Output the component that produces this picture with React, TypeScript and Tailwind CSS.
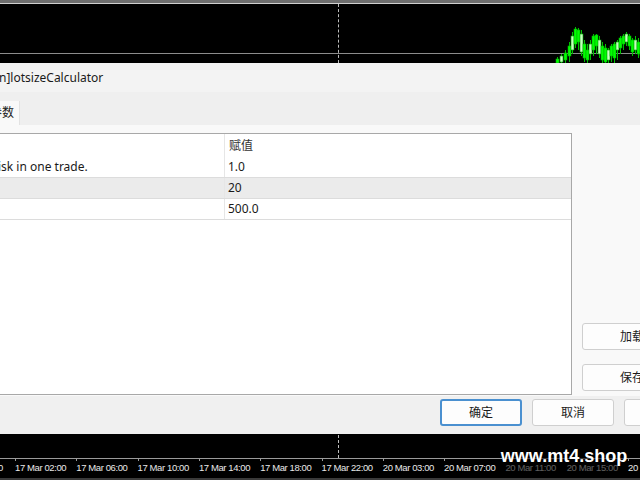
import React from 'react';

const ui = { fontFamily: '"Noto Sans", "Noto Sans CJK SC", sans-serif' };
const axisFont = { fontFamily: '"Liberation Sans", Arial, sans-serif' };

// candles: x, high, low, open, close
const candles: [number, number, number, number, number][] = [
  [2, 57, 63, 59, 63],
  [6, 54, 63, 56, 62],
  [10, 50, 63, 53, 60],
  [14, 42, 62, 46, 56],
  [17, 32, 54, 36, 50],
  [20, 27, 48, 29, 44],
  [23, 28, 50, 30, 42],
  [26, 30, 56, 34, 52],
  [29, 40, 62, 44, 58],
  [32, 44, 63, 50, 60],
  [35, 40, 60, 44, 54],
  [38, 34, 56, 36, 50],
  [41, 34, 54, 35, 46],
  [44, 36, 58, 40, 54],
  [47, 42, 63, 46, 60],
  [50, 44, 63, 48, 62],
  [53, 48, 63, 50, 60],
  [56, 44, 62, 46, 56],
  [59, 42, 63, 44, 58],
  [62, 40, 60, 42, 50],
  [65, 36, 54, 38, 48],
  [68, 34, 50, 36, 44],
  [71, 32, 46, 34, 42],
  [74, 34, 50, 36, 46],
  [77, 38, 56, 40, 52],
  [80, 36, 54, 40, 50],
  [83, 38, 58, 42, 54],
  [86, 40, 60, 44, 56],
];

const timeLabels = [
  '17 Mar 02:00',
  '17 Mar 06:00',
  '17 Mar 10:00',
  '17 Mar 14:00',
  '17 Mar 18:00',
  '17 Mar 22:00',
  '20 Mar 03:00',
  '20 Mar 07:00',
  '20 Mar 11:00',
  '20 Mar 15:00',
  '20 Mar 19:00',
];

function TopChart() {
  return (
    <div className="relative h-[63px] bg-black">
      <div className="h-[3px] bg-[#6e6e6e]" />
      <div className="h-[1px] bg-[#cfcfcf]" />
      <div className="absolute left-0 right-0 top-[53px] h-[1px] bg-[#8c8c8c]" />
      <div className="absolute left-[338px] top-[4px] bottom-0 border-l border-dashed border-[#bdbdbd]" />
      <svg className="absolute left-[554px] top-0" width="90" height="63" viewBox="0 0 90 63">
        {candles.map(([x, hi, lo, o, c], i) => (
          <g key={i}>
            <line x1={x + 1.5} y1={hi} x2={x + 1.5} y2={lo} stroke="#00c000" strokeWidth="1" />
            <rect
              x={x}
              y={Math.min(o, c)}
              width="3"
              height={Math.abs(o - c)}
              fill={i % 3 === 1 ? '#c8ffc0' : '#00ff00'}
              stroke="#00b000"
              strokeWidth="0.6"
            />
          </g>
        ))}
      </svg>
    </div>
  );
}

function Btn({ label, primary, className }: { label: string; primary?: boolean; className?: string }) {
  return (
    <div
      className={`flex h-[27px] items-center justify-center rounded-[3px] bg-[#fdfdfd] text-[12px] text-[#1a1a1a] ${
        primary ? 'border-2 border-[#4a90d0]' : 'border border-[#cfcfcf]'
      } ${className ?? ''}`}
    >
      {label}
    </div>
  );
}

function Dialog() {
  return (
    <div className="flex h-[371px] flex-col bg-[#f0f0f0] text-[12px] text-[#1a1a1a]" style={ui}>
      {/* title */}
      <div className="flex h-[29px] items-center bg-[#f3f3f3] pt-[1px]">
        <span className="-ml-[1px]">n]lotsizeCalculator</span>
      </div>
      {/* tab strip */}
      <div className="flex h-[33px] items-end bg-[#efefef]">
        <div className="flex h-[24px] w-[20px] items-center justify-end overflow-hidden border-r border-[#e2e2e2] bg-[#f9f9f9] pr-[5px]">
          <span className="whitespace-nowrap">参数</span>
        </div>
      </div>
      {/* content */}
      <div className="flex h-[271px] bg-[#f9f9f9] pt-[8px]">
        <div className="h-[262px] w-[572px] shrink-0 overflow-hidden border-y border-r border-[#a8a8a8] bg-white">
          <div className="flex h-[23px] items-center">
            <div className="h-full w-[225px] border-r border-[#e6e6e6]" />
            <div className="pl-[4px] text-[#333]">赋值</div>
          </div>
          {[
            ['isk in one trade.', '1.0', 'bg-white'],
            ['', '20', 'bg-[#ebebeb]'],
            ['', '500.0', 'bg-white'],
          ].map(([name, val, bg], i) => (
            <div key={i} className={`flex h-[21px] items-center border-b border-[#dcdcdc] ${bg}`}>
              <div className="flex h-full w-[225px] items-center overflow-hidden border-r border-[#e6e6e6]">
                <span className="-ml-[2px] whitespace-nowrap">{name}</span>
              </div>
              <div className="pl-[3px]">{val}</div>
            </div>
          ))}
        </div>
        <div className="flex shrink-0 flex-col pl-[10px] pt-[190px]">
          <Btn label="加载" className="w-[100px]" />
          <Btn label="保存" className="mt-[14px] w-[100px]" />
        </div>
      </div>
      {/* bottom buttons */}
      <div className="flex flex-1 items-start gap-[10px] pl-[440px] pt-[3px]">
        <Btn label="确定" primary className="w-[82px] shrink-0" />
        <Btn label="取消" className="w-[82px] shrink-0" />
        <Btn label="帮助" className="w-[82px] shrink-0" />
      </div>
    </div>
  );
}

function BottomChart() {
  return (
    <div className="relative h-[46px] bg-black" style={axisFont}>
      <div className="absolute left-[338px] top-[1px] h-[23px] border-l border-dashed border-[#bdbdbd]" />
      <div className="absolute left-0 right-0 top-[24px] h-[1px] bg-[#9a9a9a]" />
      <div className="absolute left-[-2px] top-[27px] text-[9.5px] tracking-[-0.4px] text-[#e8e8e8]">0</div>
      {timeLabels.map((t, i) => (
        <div key={t} className="absolute top-[24px]" style={{ left: 15 + i * 61.3 }}>
          <div className="h-[3px] w-[1px] bg-[#9a9a9a]" />
          <div className="whitespace-nowrap text-[9.5px] tracking-[-0.4px] text-[#e8e8e8]">{t}</div>
        </div>
      ))}
      <div className="absolute left-[502px] top-[12px] flex h-[32px] w-[124px] items-start justify-center bg-black/60 pt-[1px]">
        <span className="text-[18px] font-bold leading-none text-white" style={axisFont}>
          www.mt4.shop
        </span>
      </div>
      <div className="absolute bottom-0 left-0 right-0 h-[2px] bg-[#3a3a3a]" />
    </div>
  );
}

export default function App() {
  return (
    <div className="relative h-[480px] w-[640px] overflow-hidden bg-black">
      <TopChart />
      <Dialog />
      <BottomChart />
    </div>
  );
}
